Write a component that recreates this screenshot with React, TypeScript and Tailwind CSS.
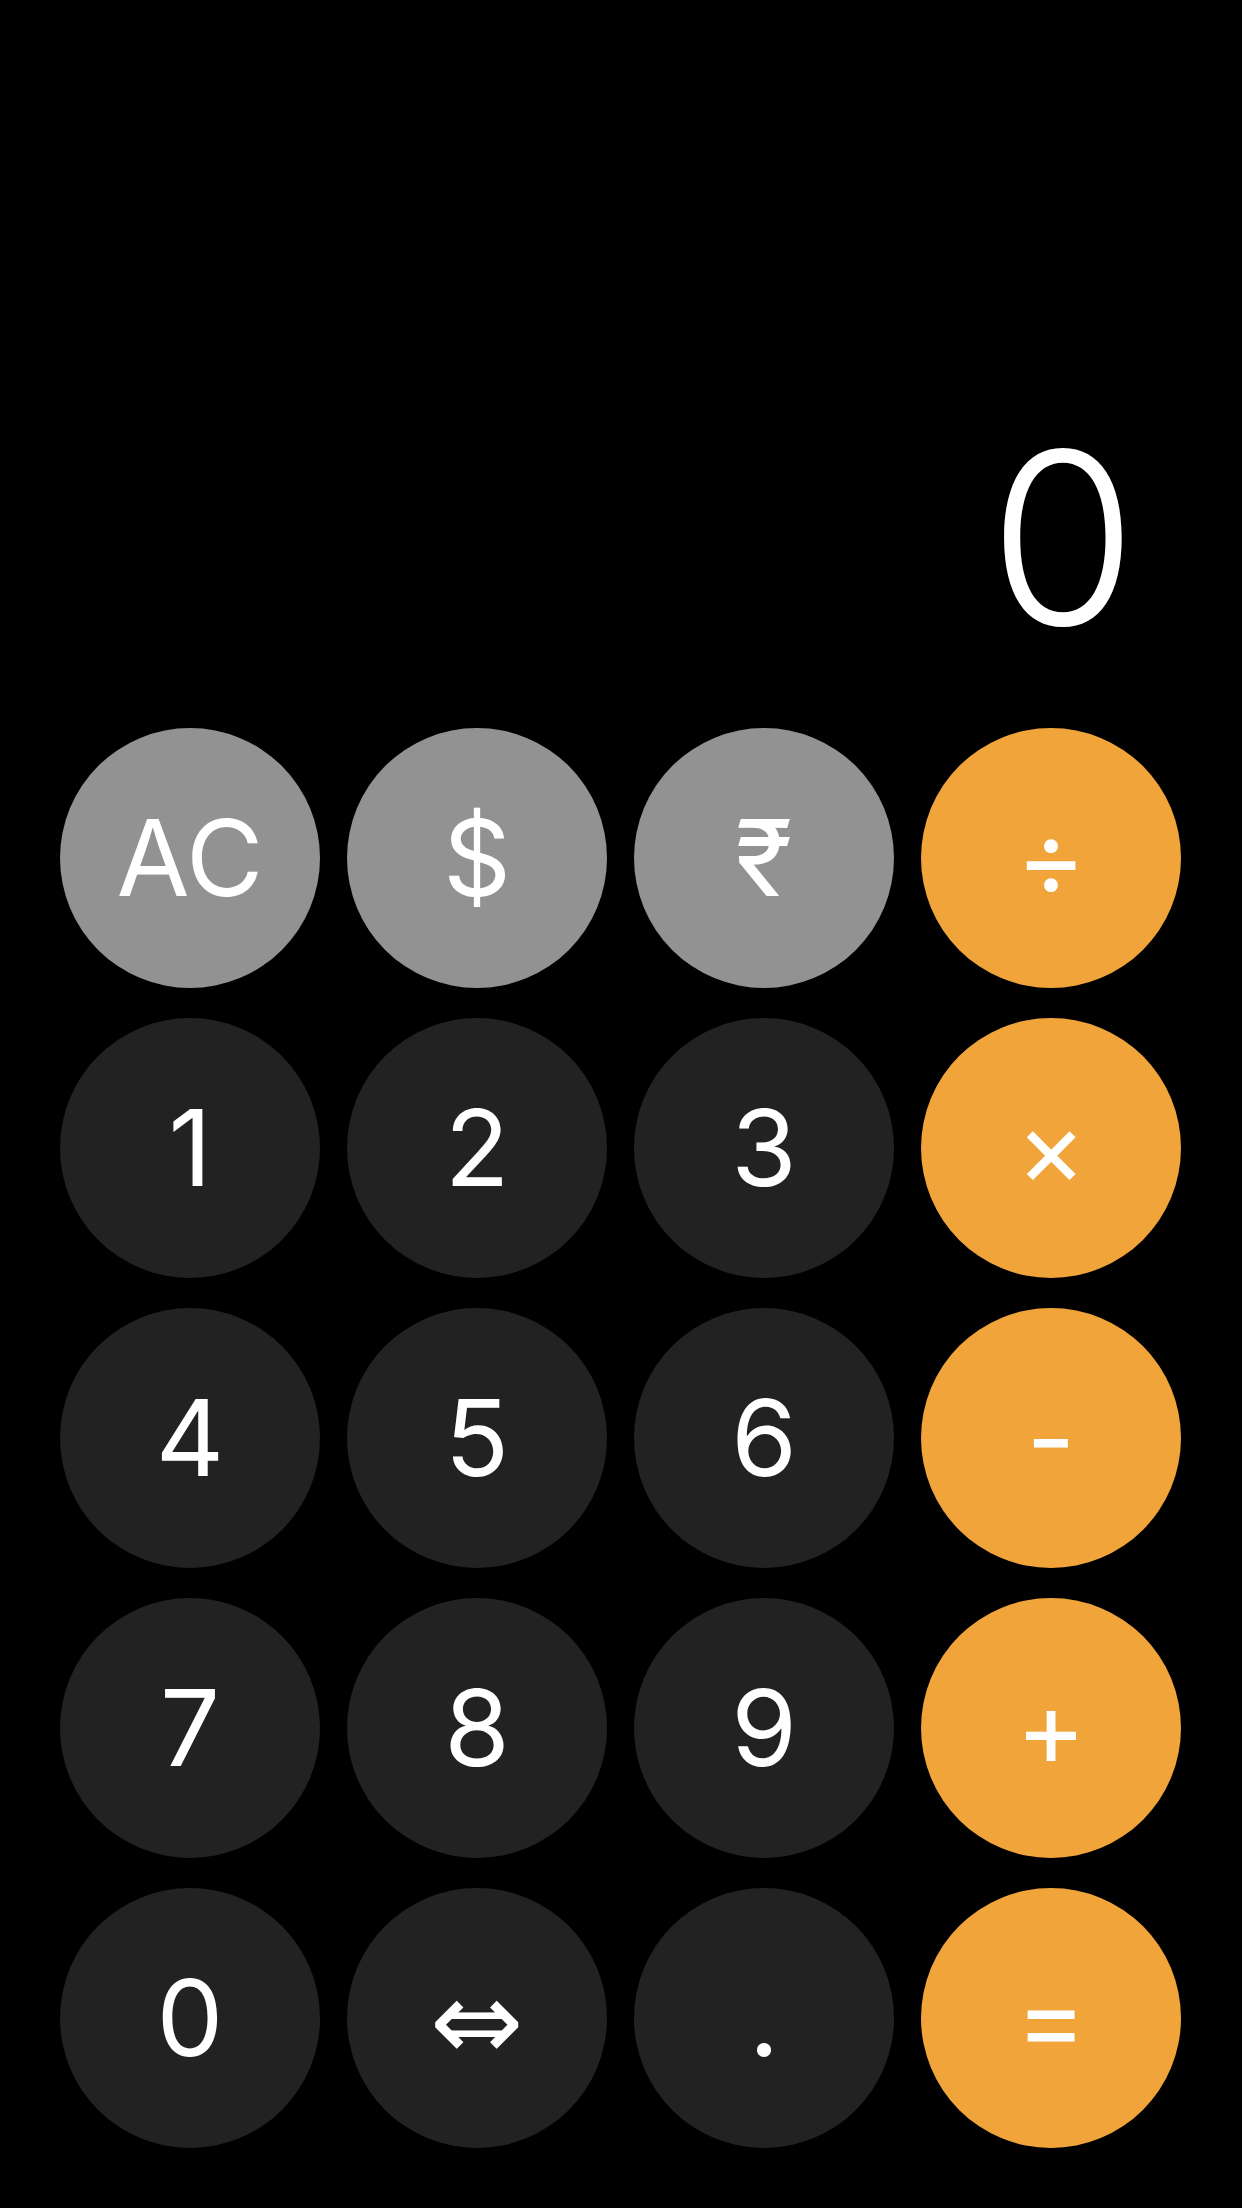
import React from "react";

type Kind = "fn" | "num" | "op";

type Key = { label: string; kind: Kind; cls?: string };

const keys: Key[] = [
  { label: "AC", kind: "fn" },
  { label: "$", kind: "fn" },
  { label: "₹", kind: "fn" },
  { label: "÷", kind: "op" },
  { label: "1", kind: "num" },
  { label: "2", kind: "num" },
  { label: "3", kind: "num" },
  { label: "×", kind: "op" },
  { label: "4", kind: "num" },
  { label: "5", kind: "num" },
  { label: "6", kind: "num" },
  { label: "-", kind: "op" },
  { label: "7", kind: "num" },
  { label: "8", kind: "num" },
  { label: "9", kind: "num" },
  { label: "+", kind: "op" },
  { label: "0", kind: "num" },
  { label: "⇔", kind: "num", cls: "font-['DejaVu_Sans',sans-serif] text-[112px] leading-none font-normal pt-[6px]" },
  { label: ".", kind: "num" },
  { label: "=", kind: "op" },
];

const bg: Record<Kind, string> = {
  fn: "bg-[#929292]",
  num: "bg-[#222222]",
  op: "bg-[#f0a43a]",
};

export default function App() {
  return (
    <div className="w-[1242px] h-[2208px] bg-black flex flex-col px-[60px] pb-[60px] font-['Inter','Roboto','Noto_Sans','DejaVu_Sans',sans-serif] text-white">
      <div className="flex-1 flex items-end justify-end pr-[45px] mb-[70px]">
        <div className="text-[240px] leading-none font-light">0</div>
      </div>
      <div className="grid grid-cols-[repeat(4,260px)] gap-x-[27px] gap-y-[30px]">
        {keys.map((k, i) => (
          <button
            key={i}
            className={`w-[260px] h-[260px] rounded-full flex items-center justify-center text-white ${bg[k.kind]}`}
          >
            <span className={k.cls ?? "text-[106px] leading-none font-normal"}>
              {k.label}
            </span>
          </button>
        ))}
      </div>
    </div>
  );
}
